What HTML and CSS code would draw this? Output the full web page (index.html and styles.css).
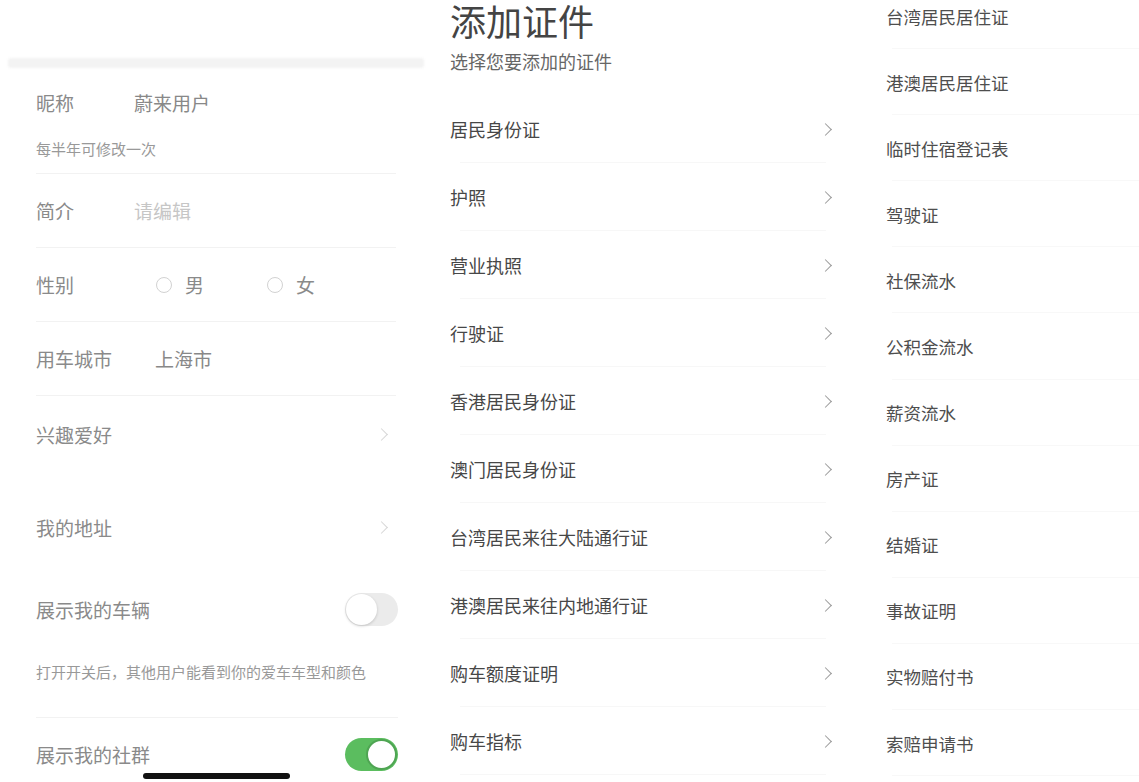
FILE: index.html
```html
<!DOCTYPE html>
<html lang="zh-CN">
<head>
    <meta charset="UTF-8">
    <meta name="viewport" content="width=device-width, initial-scale=1.0">
    <title>添加证件</title>
    <link rel="stylesheet" href="styles.css">
</head>
<body>
    <div class="screens">
        <!-- 个人资料 -->
        <section class="profile">
            <div class="band"></div>

            <div class="field field-nick">
                <div class="line">
                    <span class="label">昵称</span>
                    <span class="value">蔚来用户</span>
                </div>
                <div class="hint">每半年可修改一次</div>
            </div>

            <div class="field">
                <span class="label">简介</span>
                <span class="value placeholder">请编辑</span>
            </div>

            <div class="field">
                <span class="label">性别</span>
                <span class="radio"></span><span class="radio-text">男</span>
                <span class="radio radio-second"></span><span class="radio-text">女</span>
            </div>

            <div class="field">
                <span class="label label-wide">用车城市</span>
                <span class="value">上海市</span>
            </div>

            <div class="field field-plain field-hobby">
                <span class="label">兴趣爱好</span>
                <span class="chevron light"></span>
            </div>

            <div class="field field-plain field-address">
                <span class="label">我的地址</span>
                <span class="chevron light"></span>
            </div>

            <div class="field-switch">
                <div class="line">
                    <span class="label label-auto">展示我的车辆</span>
                    <span class="switch"><span class="knob"></span></span>
                </div>
                <div class="hint">打开开关后，其他用户能看到你的爱车车型和颜色</div>
            </div>

            <div class="field field-plain field-group">
                <span class="label label-auto">展示我的社群</span>
                <span class="switch on"><span class="knob"></span></span>
            </div>

            <div class="home-bar"></div>
        </section>

        <!-- 添加证件 -->
        <section class="docs">
            <h1>添加证件</h1>
            <p class="subtitle">选择您要添加的证件</p>
            <ul class="doc-list">
                <li>居民身份证<span class="chevron"></span></li>
                <li>护照<span class="chevron"></span></li>
                <li>营业执照<span class="chevron"></span></li>
                <li>行驶证<span class="chevron"></span></li>
                <li>香港居民身份证<span class="chevron"></span></li>
                <li>澳门居民身份证<span class="chevron"></span></li>
                <li>台湾居民来往大陆通行证<span class="chevron"></span></li>
                <li>港澳居民来往内地通行证<span class="chevron"></span></li>
                <li>购车额度证明<span class="chevron"></span></li>
                <li>购车指标<span class="chevron"></span></li>
            </ul>
        </section>

        <!-- 续表 -->
        <section class="more">
            <ul class="more-list">
                <li>台湾居民居住证</li>
                <li>港澳居民居住证</li>
                <li>临时住宿登记表</li>
                <li>驾驶证</li>
                <li>社保流水</li>
                <li>公积金流水</li>
                <li>薪资流水</li>
                <li>房产证</li>
                <li>结婚证</li>
                <li>事故证明</li>
                <li>实物赔付书</li>
                <li>索赔申请书</li>
            </ul>
        </section>
    </div>
</body>
</html>
```

FILE: styles.css
```css
html, body {
    margin: 0;
    padding: 0;
    background: #fff;
}
body {
    font-family: "Noto Sans CJK SC", "Noto Sans", sans-serif;
    width: 1139px;
    height: 782px;
    overflow: hidden;
}
.screens {
    display: grid;
    grid-template-columns: 430px 430px 1fr;
    height: 782px;
}

/* 左栏 */
.profile {
    position: relative;
    height: 782px;
    overflow: hidden;
}
.band {
    margin: 58px 6px 0 8px;
    height: 10px;
    background: #f3f3f3;
    border-radius: 3px;
    filter: blur(1px);
}
.field {
    display: flex;
    align-items: center;
    margin-left: 36px;
    width: 360px;
    height: 73px;
    border-bottom: 1px solid #f2f2f2;
    font-size: 19px;
    color: #8a8a8a;
}
.field-nick {
    display: block;
    height: auto;
    padding: 17px 0 14px;
}
.line {
    display: flex;
    align-items: center;
    height: 34px;
}
.label {
    width: 98px;
    flex-shrink: 0;
}
.label-wide {
    width: 119px;
}
.label-auto {
    width: auto;
}
.value {
    color: #888;
}
.placeholder {
    color: #c6c6c6;
}
.hint {
    margin-top: 20px;
    height: 20px;
    line-height: 20px;
    font-size: 15px;
    color: #999;
}
.radio {
    width: 14px;
    height: 14px;
    border: 1.5px solid #d2d2d2;
    border-radius: 50%;
    margin-left: 22px;
}
.radio-second {
    margin-left: 63px;
}
.radio-text {
    margin-left: 13px;
}
.field-plain {
    border-bottom: none;
}
.field-hobby {
    height: 76px;
}
.field-address {
    margin-top: 18px;
    height: 74px;
}
.field-switch {
    margin-left: 36px;
    width: 362px;
    padding: 11px 0 35px;
    border-bottom: 1px solid #f2f2f2;
    font-size: 19px;
    color: #8a8a8a;
}
.field-switch .line {
    height: 68px;
    justify-content: space-between;
}
.field-switch .hint {
    margin-top: 19px;
}
.field-group {
    width: 362px;
    height: 72px;
    justify-content: space-between;
}
.chevron {
    margin-left: auto;
    margin-right: 10px;
    width: 8px;
    height: 8px;
    border-top: 1.3px solid #9a9a9a;
    border-right: 1.3px solid #9a9a9a;
    transform: rotate(45deg);
}
.chevron.light {
    border-color: #d6d6d6;
}
.switch {
    display: flex;
    align-items: center;
    box-sizing: border-box;
    width: 53px;
    height: 33px;
    padding: 1px;
    border-radius: 17px;
    background: #ebebeb;
}
.knob {
    width: 31px;
    height: 31px;
    border-radius: 50%;
    background: #fff;
    box-shadow: 0 1px 3px rgba(0, 0, 0, 0.18);
}
.switch.on {
    background: #5bbd5f;
    justify-content: flex-end;
}
.switch.on .knob {
    box-sizing: border-box;
    border: 2px solid #4fa553;
    box-shadow: none;
}
.home-bar {
    position: absolute;
    left: 143px;
    top: 773px;
    width: 147px;
    height: 6px;
    border-radius: 3px;
    background: #111;
}

/* 中栏 */
.docs {
    padding-left: 20px;
    color: #474747;
}
.docs h1 {
    margin: 0;
    font-size: 36px;
    line-height: 40px;
    font-weight: normal;
    color: #444;
}
.subtitle {
    margin: 11px 0 0;
    font-size: 18px;
    line-height: 20px;
    color: #666;
}
.doc-list {
    list-style: none;
    margin: 24px 0 0;
    padding: 0;
    width: 384px;
}
.doc-list li {
    display: flex;
    align-items: center;
    height: 68px;
    font-size: 18px;
    background: linear-gradient(#f7f7f7, #f7f7f7) 10px 100% / 366px 1px no-repeat;
}
.doc-list .chevron {
    margin-right: 4px;
}

/* 右栏 */
.more {
    padding-left: 26px;
    color: #4e4e4e;
}
.more-list {
    list-style: none;
    margin: -17px 0 0;
    padding: 0;
}
.more-list li {
    display: flex;
    align-items: center;
    height: 66.1px;
    font-size: 17.5px;
    background: linear-gradient(#f8f8f8, #f8f8f8) 6px 100% / 100% 1px no-repeat;
}
```
